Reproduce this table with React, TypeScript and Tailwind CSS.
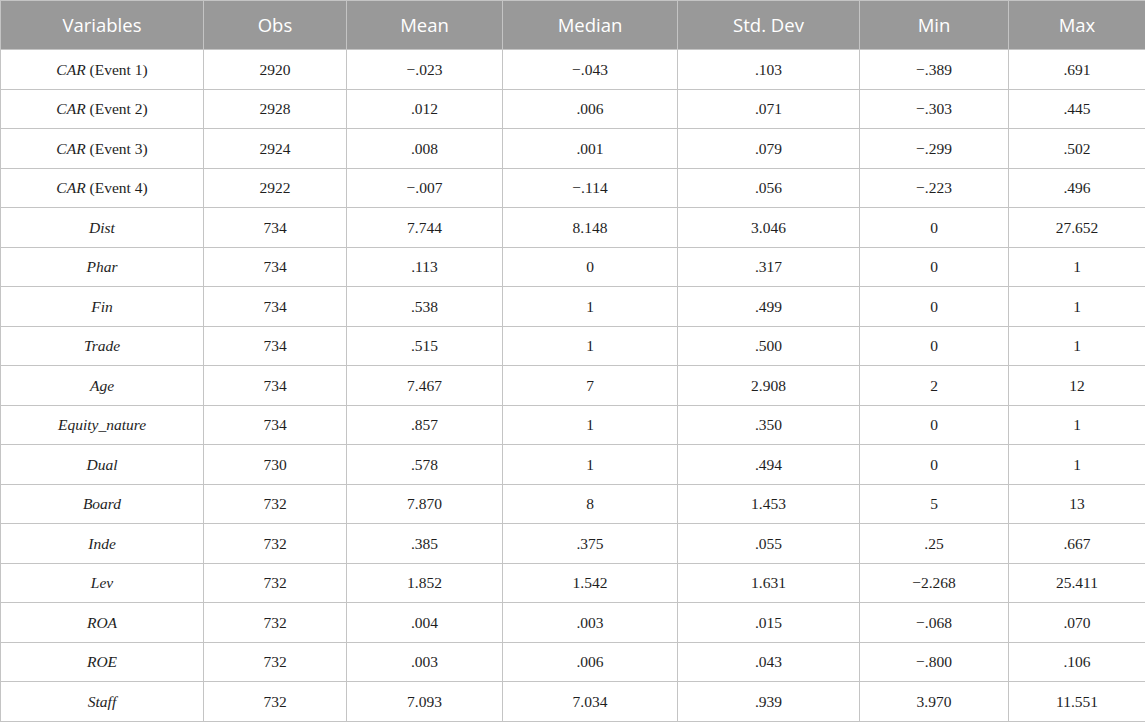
const header = ["Variables", "Obs", "Mean", "Median", "Std. Dev", "Min", "Max"];

const widths = [
  "w-[203px]",
  "w-[143px]",
  "w-[156px]",
  "w-[175px]",
  "w-[182px]",
  "w-[149px]",
  "w-[137px]",
];

type Row = {
  name: string;
  event?: string;
  values: string[];
};

const rows: Row[] = [
  { name: "CAR", event: "(Event 1)", values: ["2920", "−.023", "−.043", ".103", "−.389", ".691"] },
  { name: "CAR", event: "(Event 2)", values: ["2928", ".012", ".006", ".071", "−.303", ".445"] },
  { name: "CAR", event: "(Event 3)", values: ["2924", ".008", ".001", ".079", "−.299", ".502"] },
  { name: "CAR", event: "(Event 4)", values: ["2922", "−.007", "−.114", ".056", "−.223", ".496"] },
  { name: "Dist", values: ["734", "7.744", "8.148", "3.046", "0", "27.652"] },
  { name: "Phar", values: ["734", ".113", "0", ".317", "0", "1"] },
  { name: "Fin", values: ["734", ".538", "1", ".499", "0", "1"] },
  { name: "Trade", values: ["734", ".515", "1", ".500", "0", "1"] },
  { name: "Age", values: ["734", "7.467", "7", "2.908", "2", "12"] },
  { name: "Equity_nature", values: ["734", ".857", "1", ".350", "0", "1"] },
  { name: "Dual", values: ["730", ".578", "1", ".494", "0", "1"] },
  { name: "Board", values: ["732", "7.870", "8", "1.453", "5", "13"] },
  { name: "Inde", values: ["732", ".385", ".375", ".055", ".25", ".667"] },
  { name: "Lev", values: ["732", "1.852", "1.542", "1.631", "−2.268", "25.411"] },
  { name: "ROA", values: ["732", ".004", ".003", ".015", "−.068", ".070"] },
  { name: "ROE", values: ["732", ".003", ".006", ".043", "−.800", ".106"] },
  { name: "Staff", values: ["732", "7.093", "7.034", ".939", "3.970", "11.551"] },
];

const App = () => {
  return (
    <div className="w-[1145px] h-[723px] bg-white">
      <table className="table-fixed border-collapse w-[1144px] text-center">
        <colgroup>
          {widths.map((w, i) => (
            <col key={i} className={w} />
          ))}
        </colgroup>
        <thead>
          <tr className="h-[49px] bg-[#999999]">
            {header.map((h) => (
              <th
                key={h}
                className="border border-[#c4c4c4] font-normal text-white text-[18.5px] font-['Open_Sans',sans-serif]"
              >
                {h}
              </th>
            ))}
          </tr>
        </thead>
        <tbody className="font-['Liberation_Serif',serif] text-[15.5px] text-[#1e1e1e]">
          {rows.map((row, i) => (
            <tr key={i} className="h-[39.5px]">
              <td className="border border-[#c4c4c4]">
                <i>{row.name}</i>
                {row.event && <span> {row.event}</span>}
              </td>
              {row.values.map((v, j) => (
                <td key={j} className="border border-[#c4c4c4]">
                  {v}
                </td>
              ))}
            </tr>
          ))}
        </tbody>
      </table>
    </div>
  );
};

export default App;
